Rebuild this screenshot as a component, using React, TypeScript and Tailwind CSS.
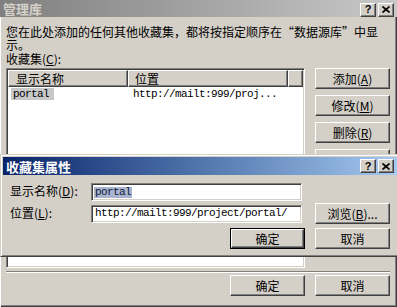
import React from "react";

const CJK = { fontFamily: '"Noto Sans CJK SC", "Noto Sans", sans-serif' };
const MONO = { fontFamily: '"Liberation Mono", "DejaVu Sans Mono", monospace' };

function TitleBtn({ kind }: { kind: "help" | "close" }) {
  return (
    <div className="w-[16px] h-[14px] bg-[#d4d0c8] border border-t-white border-l-white border-r-[#404040] border-b-[#404040] shadow-[inset_-1px_-1px_0_#808080] flex items-center justify-center overflow-hidden">
      {kind === "help" ? (
        <span
          className="text-[11px] font-bold leading-[11px] text-black"
          style={{ fontFamily: '"Liberation Sans", Arial, sans-serif' }}
        >
          ?
        </span>
      ) : (
        <svg width="8" height="7" viewBox="0 0 8 7">
          <path d="M0.5 0.5 L7.5 6.5 M7.5 0.5 L0.5 6.5" stroke="#000" strokeWidth="1.7" />
        </svg>
      )}
    </div>
  );
}

function Btn({
  children,
  def = false,
}: {
  children: React.ReactNode;
  def?: boolean;
}) {
  const inner = (
    <div className="h-full w-full flex items-center justify-center bg-[#d4d0c8] border border-t-white border-l-white border-r-[#404040] border-b-[#404040] shadow-[inset_-1px_-1px_0_#808080] text-[12px] leading-none text-black">
      {children}
    </div>
  );
  if (def) {
    return <div className="w-[75px] h-[21px] border border-black">{inner}</div>;
  }
  return <div className="w-[75px] h-[21px]">{inner}</div>;
}

function Field({ children }: { children: React.ReactNode }) {
  return (
    <div className="w-[211px] h-[18px] bg-white border border-t-[#808080] border-l-[#808080] border-r-white border-b-white shadow-[inset_1px_1px_0_#404040,inset_-1px_-1px_0_#d4d0c8] flex items-center pl-[2px] overflow-hidden">
      {children}
    </div>
  );
}

function HeaderCell({ children, className }: { children?: React.ReactNode; className: string }) {
  return (
    <div
      className={`${className} h-full flex items-center border-t border-l border-t-white border-l-white border-r border-b border-r-[#404040] border-b-[#404040] shadow-[inset_-1px_-1px_0_#808080] text-[12px] leading-none`}
    >
      {children}
    </div>
  );
}

export default function App() {
  return (
    <div
      className="relative w-[397px] h-[307px] overflow-hidden bg-[#d4d0c8] text-black shadow-[inset_1px_0_0_#ffffff,inset_-1px_-1px_0_#404040,inset_-2px_-2px_0_#808080]"
      style={CJK}
    >
      {/* Outer title bar (inactive) */}
      <div className="h-[17px] flex items-center bg-gradient-to-r from-[#808080] to-[#c8c8c8] pl-[3px] pr-[3px]">
        <span className="text-[13px] font-bold leading-none text-[#d4d0c8]">管理库</span>
        <div className="ml-auto flex gap-[2px] pt-[2px]">
          <TitleBtn kind="help" />
          <TitleBtn kind="close" />
        </div>
      </div>

      <div className="pl-[6px] pr-[7px] pt-[8px]">
        <div className="text-[12px] leading-[13px] whitespace-nowrap">
          <div className="h-[13px]">
            您在此处添加的任何其他收藏集，都将按指定顺序在
            <span className="inline-block w-[12px] text-right">“</span>
            数据源库
            <span className="inline-block w-[12px] text-left">”</span>
            中显
          </div>
          <div className="h-[13px]">示。</div>
        </div>
        <div className="mt-[1px] text-[12px] leading-[13px]">
          收藏集(<u>C</u>):
        </div>

        <div className="mt-[3px] flex gap-[10px]">
          {/* List view */}
          <div className="w-[299px] h-[200px] bg-white border border-t-[#808080] border-l-[#808080] border-r-white border-b-white shadow-[inset_1px_1px_0_#404040,inset_-1px_-1px_0_#d4d0c8] p-[1px] flex flex-col">
            <div className="h-[17px] flex bg-[#d4d0c8]">
              <HeaderCell className="w-[120px] pl-[7px]">显示名称</HeaderCell>
              <HeaderCell className="w-[160px] pl-[6px]">位置</HeaderCell>
              <HeaderCell className="flex-1" />
            </div>
            <div className="h-[12px] mt-[1px] flex items-center text-[11px] leading-none" style={MONO}>
              <div className="ml-[3px] w-[43px] h-full bg-[#c8c8c8] flex items-center pl-[2px] tracking-[-0.6px]">
                portal
              </div>
              <div className="ml-[79px] tracking-[-0.6px]">http://mailt:999/proj...</div>
            </div>
          </div>

          {/* Right buttons */}
          <div className="w-[75px] flex flex-col gap-[6px]">
            <Btn>
              添加(<u>A</u>)
            </Btn>
            <Btn>
              修改(<u>M</u>)
            </Btn>
            <Btn>
              删除(<u>R</u>)
            </Btn>
            <Btn>
              上移(<u>U</u>)
            </Btn>
          </div>
        </div>

        {/* Separator */}
        <div className="mt-[3px] h-[2px] border-t border-t-[#808080] border-b border-b-white" />

        <div className="mt-[2px] flex justify-end gap-[10px]">
          <Btn>确定</Btn>
          <Btn>取消</Btn>
        </div>
      </div>

      {/* Inner dialog (active) */}
      <div className="absolute left-0 top-[154px] w-[401px] h-[103px] bg-[#d4d0c8] border border-t-[#d4d0c8] border-l-[#d4d0c8] border-r-[#404040] border-b-[#404040] shadow-[inset_1px_1px_0_#ffffff,inset_-1px_-1px_0_#808080] p-[2px] flex flex-col">
        <div className="h-[18px] flex items-center bg-gradient-to-r from-[#0a246a] to-[#a6caf0] pl-[3px] pr-[4px]">
          <span className="text-[13px] font-bold leading-none text-white">收藏集属性</span>
          <div className="ml-auto flex gap-[2px]">
            <TitleBtn kind="help" />
            <TitleBtn kind="close" />
          </div>
        </div>
        <div className="pl-[7px] pt-[8px] flex flex-col">
          <div className="h-[18px] flex items-center">
            <div className="w-[81px] text-[12px] leading-none -mt-[3px]">
              显示名称(<u>D</u>):
            </div>
            <Field>
              <span
                className="text-[11px] leading-[11px] bg-[#a9b4cf] text-[#10183a] px-[1px] tracking-[-0.6px]"
                style={MONO}
              >
                portal
              </span>
            </Field>
          </div>
          <div className="mt-[2px] h-[21px] flex items-center">
            <div className="w-[81px] text-[12px] leading-none -mt-[2px]">
              位置(<u>L</u>):
            </div>
            <Field>
              <span className="text-[11px] leading-none tracking-[-0.6px] pl-[1px]" style={MONO}>
                http://mailt:999/project/portal/
              </span>
            </Field>
            <div className="ml-[13px]">
              <Btn>
                浏览(<u>B</u>)...
              </Btn>
            </div>
          </div>
          <div className="mt-[4px] flex gap-[10px] pl-[220px]">
            <Btn def>确定</Btn>
            <Btn>取消</Btn>
          </div>
        </div>
      </div>
    </div>
  );
}
